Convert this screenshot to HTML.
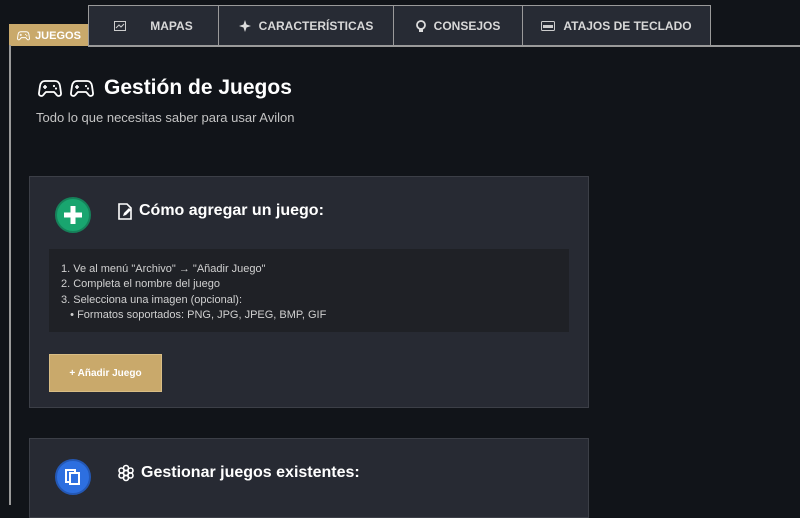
<!DOCTYPE html>
<html><head><meta charset="utf-8"><style>
*{margin:0;padding:0;box-sizing:border-box}
body{width:800px;height:500px;overflow:hidden;background:#111419;font-family:"Liberation Sans","DejaVu Sans",sans-serif;color:#fff;position:relative}
.tab{position:absolute;top:5px;height:41px;background:#272b34;border:1px solid #9a9a9a;border-bottom:none;color:#d8d8d8;font-size:12px;font-weight:bold;display:flex;align-items:center;justify-content:center;gap:8px}
.line{position:absolute;left:88px;right:0;top:45px;height:2px;background:#9a9a9a}
.panel{position:absolute;left:9px;top:45px;width:2px;height:460px;background:#9a9a9a}
.card{position:absolute;left:29px;width:560px;background:#272a33;border:1px solid #3c3f47}
.circ{position:absolute;left:25px;width:36px;height:36px;border-radius:50%}
.h{position:absolute;left:87px;font-size:16px;font-weight:bold;display:flex;align-items:center;gap:6px}
svg{display:block}
</style></head><body>
<svg width="0" height="0" style="position:absolute"><defs>
<symbol id="pad" viewBox="0 0 24 20"><path d="M7 3h10c3 0 4.5 2 5 5l1 7c.3 2-1 3-2.5 3-1.3 0-2-1-3-2.5L16 14H8l-1.5 1.5C5.5 17 4.8 18 3.5 18 2 18 .7 17 1 15l1-7c.5-3 2-5 5-5z" fill="none" stroke="currentColor" stroke-width="1.8"/><path d="M7 7v4M5 9h4" stroke="currentColor" stroke-width="1.6"/><circle cx="16" cy="8" r="1.1" fill="currentColor"/><circle cx="18" cy="10.5" r="1.1" fill="currentColor"/></symbol>
</defs></svg>
<div class="tab" style="left:9px;top:24px;width:80px;height:22px;background:#c9a96b;color:#fff;border-color:#c9a96b;gap:5px;font-size:11px"><svg width="13" height="11" style="color:#fff"><use href="#pad"/></svg>JUEGOS</div>
<div class="tab" style="left:88px;width:131px;gap:24px"><svg width="12" height="10" viewBox="0 0 12 10"><rect x=".5" y=".5" width="11" height="9" fill="none" stroke="#ccc"/><path d="M2 7l3-3 2 2 3-3" stroke="#ccc" fill="none"/></svg>MAPAS</div>
<div class="tab" style="left:218px;width:176px"><svg width="12" height="12" viewBox="0 0 12 12"><path d="M6 0l1.5 4.5L12 6 7.5 7.5 6 12 4.5 7.5 0 6l4.5-1.5z" fill="#ddd"/></svg>CARACTERÍSTICAS</div>
<div class="tab" style="left:393px;width:130px"><svg width="10" height="13" viewBox="0 0 10 13"><circle cx="5" cy="5" r="4" fill="none" stroke="#ddd" stroke-width="1.8"/><rect x="3" y="9" width="4" height="3" fill="#ddd"/></svg>CONSEJOS</div>
<div class="tab" style="left:522px;width:189px"><svg width="14" height="10" viewBox="0 0 14 10"><rect x=".5" y=".5" width="13" height="9" rx="1" fill="none" stroke="#ccc"/><rect x="2" y="4" width="10" height="3" fill="#ccc"/></svg>ATAJOS DE TECLADO</div>
<div class="line"></div>
<div class="panel"></div>
<div style="position:absolute;left:38px;top:76px;font-size:21px;font-weight:bold;display:flex;align-items:center;gap:8px"><svg width="24" height="20"><use href="#pad"/></svg><svg width="24" height="20"><use href="#pad"/></svg><span style="margin-left:2px">Gestión de Juegos</span></div>
<div style="position:absolute;left:36px;top:110px;font-size:13px;color:#c4c4c4">Todo lo que necesitas saber para usar Avilon</div>
<div class="card" style="top:176px;height:232px">
<div class="circ" style="top:20px;background:#19a56f;border:2px solid #16815a"><svg width="32" height="32" viewBox="0 0 32 32"><path d="M16 7v18M7 16h18" stroke="#fff" stroke-width="5"/></svg></div>
<div class="h" style="top:25px"><svg width="16" height="17" viewBox="0 0 16 17"><path d="M2 1h8l4 4v11H2z" fill="none" stroke="#fff" stroke-width="1.6"/><path d="M6 13l1-3 5-5 2 2-5 5z" fill="#fff"/></svg>Cómo agregar un juego:</div>
<div style="position:absolute;left:19px;top:72px;width:520px;height:83px;background:#1f2126;padding:13px 0 0 12px;font-size:11px;line-height:15.3px;color:#d0d0d0">1. Ve al menú "Archivo" → "Añadir Juego"<br>2. Completa el nombre del juego<br>3. Selecciona una imagen (opcional):<br>&nbsp;&nbsp;&nbsp;• Formatos soportados: PNG, JPG, JPEG, BMP, GIF</div>
<div style="position:absolute;left:19px;top:177px;width:113px;height:38px;background:#c9a96b;border:1px solid #d8bd85;color:#fff;font-size:10px;font-weight:bold;text-align:center;line-height:38px">+ Añadir Juego</div>
</div>
<div class="card" style="top:438px;height:80px">
<div class="circ" style="top:20px;background:#2d6fe0;border:2px solid #2458b5"><svg width="32" height="32" viewBox="0 0 32 32"><rect x="9" y="9" width="9" height="12" fill="none" stroke="#fff" stroke-width="2"/><rect x="13" y="12" width="9" height="11" fill="#2d6fe0" stroke="#fff" stroke-width="2"/></svg></div>
<div class="h" style="top:25px"><svg width="18" height="18" viewBox="0 0 18 18"><g fill="none" stroke="#fff" stroke-width="1.6"><circle cx="9" cy="9" r="2.5"/><circle cx="9" cy="4" r="2.5"/><circle cx="9" cy="14" r="2.5"/><circle cx="4.5" cy="6.5" r="2.5"/><circle cx="13.5" cy="6.5" r="2.5"/><circle cx="4.5" cy="11.5" r="2.5"/><circle cx="13.5" cy="11.5" r="2.5"/></g></svg>Gestionar juegos existentes:</div>
</div>
</body></html>
